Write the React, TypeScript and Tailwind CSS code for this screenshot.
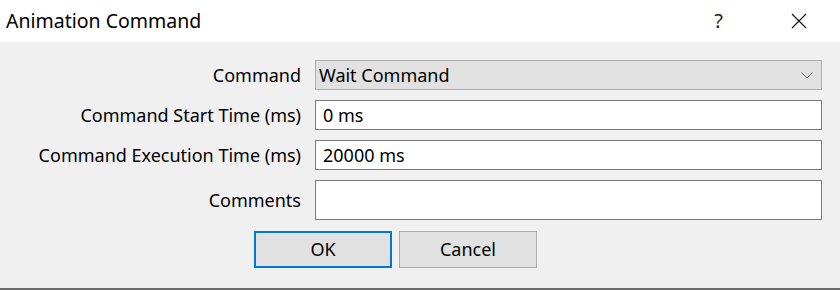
const font = { fontFamily: '"Noto Sans", "Open Sans", sans-serif' };

function Row({ label, children }: { label: string; children: React.ReactNode }) {
  return (
    <div className="flex items-center gap-[14px]">
      <div className="w-[301px] text-right text-[18px] leading-none text-black">{label}</div>
      {children}
    </div>
  );
}

function TextBox({ value, tall }: { value: string; tall?: boolean }) {
  return (
    <div
      className={`flex w-[507px] items-center border border-[#7a7a7a] bg-white px-[7px] text-[18px] text-black ${
        tall ? "h-[40px]" : "h-[30px]"
      }`}
    >
      {value}
    </div>
  );
}

export default function App() {
  return (
    <div className="flex h-[290px] w-[840px] flex-col bg-[#f0f0f0]" style={font}>
      <div className="flex h-[42px] items-center bg-white">
        <span className="ml-[6px] flex-1 text-[19.5px] text-black">Animation Command</span>
        <span className="mr-[68px] text-[20px] text-[#222]">?</span>
        <svg className="mr-[33px]" width="16" height="16" viewBox="0 0 16 16">
          <path d="M1 1L15 15M15 1L1 15" stroke="#111" strokeWidth="1.1" />
        </svg>
      </div>
      <div className="flex flex-1 flex-col gap-[10px] pt-[18px]">
        <Row label="Command">
          <div className="flex h-[30px] w-[507px] items-center justify-between border border-[#adadad] bg-[#e1e1e1] px-[3px] text-[18px] text-black">
            <span>Wait Command</span>
            <svg className="mr-[5px]" width="12" height="7" viewBox="0 0 12 7">
              <path d="M0.5 0.5L6 6L11.5 0.5" fill="none" stroke="#606060" strokeWidth="1" />
            </svg>
          </div>
        </Row>
        <Row label="Command Start Time (ms)">
          <TextBox value="0 ms" />
        </Row>
        <Row label="Command Execution Time (ms)">
          <TextBox value="20000 ms" />
        </Row>
        <Row label="Comments">
          <TextBox value="" tall />
        </Row>
        <div className="mt-[1px] flex gap-[7px] pl-[254px]">
          <button className="h-[37px] w-[138px] border-2 border-[#0078d7] bg-[#e1e1e1] text-[18px] text-black">
            OK
          </button>
          <button className="h-[37px] w-[138px] border border-[#adadad] bg-[#e1e1e1] text-[18px] text-black">
            Cancel
          </button>
        </div>
      </div>
      <div className="h-[2px] bg-[#6b6b6b]" />
    </div>
  );
}
